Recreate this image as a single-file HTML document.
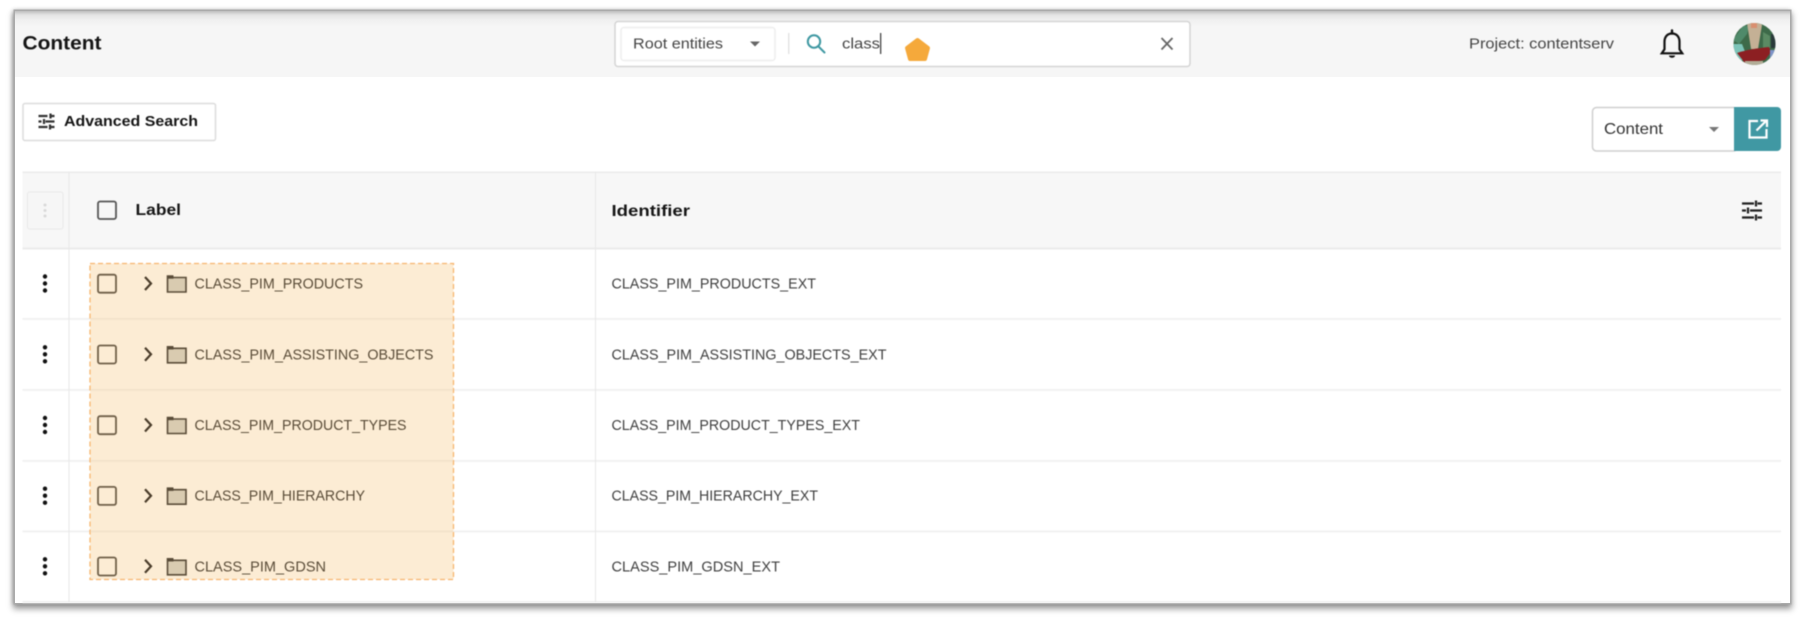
<!DOCTYPE html>
<html><head><meta charset="utf-8"><title>Content</title>
<style>
html,body{margin:0;padding:0;width:1814px;height:630px;overflow:hidden;background:#fff}
#f{position:absolute;left:15px;top:11px;width:1775px;height:592px;background:#fff;box-shadow:0 0 0 1.5px #aaa,0 4px 6px 2px rgba(0,0,0,.38),-1px 0 4px 1px rgba(0,0,0,.25)}
#g{position:absolute;left:15px;top:11px;width:1775px;height:66px;background:linear-gradient(#bdbdbd 0,#e4e4e4 4px,#f0f0f0 9px,#f6f6f6 16px,#f6f6f6 100%)}
svg{position:absolute;left:0;top:0;filter:blur(.65px)}
text{font-family:"Liberation Sans",sans-serif;dominant-baseline:auto}
.r{font-size:14.5px;fill:#3f3f3f}
.h{font-size:14.5px;fill:#5a4c38}
.b{font-weight:700;fill:#151515}
</style></head><body>
<div id="f"></div><div id="g"></div>
<svg width="1814" height="630" viewBox="0 0 1814 630" xmlns="http://www.w3.org/2000/svg">
<text x="22.5" y="49.5" class="b" font-size="19" textLength="79" lengthAdjust="spacingAndGlyphs">Content</text>

<!-- search -->
<rect x="615" y="21.5" width="575" height="45" rx="3" fill="#fff" stroke="#d4d4d4" stroke-width="1.5"/>
<rect x="621" y="27.5" width="154" height="33" rx="3" fill="#fff" stroke="#eee" stroke-width="1.5"/>
<text x="633" y="48.5" font-size="15" fill="#444" textLength="90" lengthAdjust="spacingAndGlyphs">Root entities</text>
<path d="M750 41.5h10l-5 5z" fill="#666"/>
<rect x="788" y="33" width="1.5" height="21" fill="#e4e4e4"/>
<g fill="none" stroke="#3f98a2" stroke-width="2"><circle cx="814" cy="41.5" r="6.2"/><path d="M818.5 46.5l6 6" stroke-linecap="round"/></g>
<text x="842" y="48.5" font-size="15" fill="#444" textLength="38" lengthAdjust="spacingAndGlyphs">class</text>
<rect x="880" y="33" width="1.3" height="21" fill="#444"/>
<path d="M917.5 40l10.500 8-3 11h-15l-3-11z" fill="#f5a93b" stroke="#f5a93b" stroke-width="4" stroke-linejoin="round"/>
<path d="M1161.5 38l11 11.5M1172.5 38l-11 11.5" stroke="#666" stroke-width="1.8" fill="none"/>

<text x="1469" y="48.5" font-size="15" fill="#444" textLength="145" lengthAdjust="spacingAndGlyphs">Project: contentserv</text>
<!-- bell -->
<path d="M1672 33.5c-4.8 0-7.5 3.6-7.500 8.200v7.600l-2.700 4h20.400l-2.700-4v-7.600c0-4.600-2.700-8.200-7.500-8.200z" fill="none" stroke="#111" stroke-width="2.200"/>
<path d="M1672 30.500v3" stroke="#111" stroke-width="2.400" stroke-linecap="round"/>
<path d="M1669 55.500h6c0 3-6 3-6 0z" fill="#111"/>
<!-- avatar -->
<clipPath id="av"><circle cx="1754.500" cy="44" r="21"/></clipPath>
<g clip-path="url(#av)">
<rect x="1733" y="22" width="43" height="44" fill="#3d6a49"/>
<path d="M1733 40l10-14 6 0-2 8-8 10z" fill="#4f8a6a"/>
<path d="M1733 44h9l4 10-5 8-8-6z" fill="#7cc4b8"/>
<path d="M1747 23h12l3 2-4 24h-7z" fill="#c4b095"/>
<path d="M1751 23h6v5h-6z" fill="#d98f70"/>
<path d="M1763 32l7 4v12h-7z" fill="#5b8a63"/>
<path d="M1771 34h6v14h-6z" fill="#29393a"/>
<path d="M1737 53c8-3 22-5 32-6l2 5-6 8-20 3z" fill="#8c1f22"/>
<path d="M1745 61h18v6h-18z" fill="#b3ad97"/>
<path d="M1770 50h8v8h-8z" fill="#7d93c8"/>
</g>

<!-- advanced -->
<rect x="23" y="103.500" width="192.500" height="37" rx="2" fill="#fff" stroke="#dcdcdc" stroke-width="1.500"/>
<g stroke="#333" stroke-width="2.200" fill="none"><path d="M38.500 116h9M51 116h3.500M50.500 113.500v5M38.500 121.500h3M45.500 121.500h9M44 119v5M38.500 127h9M51 127h3.500M50 124.500v5"/></g>
<text x="64" y="126" class="b" font-size="15" textLength="134" lengthAdjust="spacingAndGlyphs">Advanced Search</text>

<!-- content select -->
<rect x="1592.500" y="107.500" width="145" height="43.500" rx="4" fill="#fff" stroke="#cfcfcf" stroke-width="1.500"/>
<text x="1604" y="134" font-size="16" fill="#333" textLength="59" lengthAdjust="spacingAndGlyphs">Content</text>
<path d="M1709 127h10l-5 5z" fill="#777"/>
<path d="M1734 107h43a4 4 0 0 1 4 4v36a4 4 0 0 1-4 4h-43z" fill="#4098a3"/>
<path d="M1758 121h-8.500v16.500h17v-8.500M1756.500 130.500l10-10M1760.500 120.500h6.500v6.500" fill="none" stroke="#fff" stroke-width="2.200"/>

<!-- table -->
<rect x="22.500" y="172" width="1758.500" height="77" fill="#f7f7f7"/>
<rect x="22.500" y="171.500" width="1758.500" height="1.500" fill="#ebebeb"/>
<rect x="22.500" y="247.500" width="1758.500" height="2" fill="#ebebeb"/>
<g fill="#f0f0f0">
<rect x="22.500" y="318" width="1758.500" height="1.800"/>
<rect x="22.500" y="389" width="1758.500" height="1.800"/>
<rect x="22.500" y="460" width="1758.500" height="1.800"/>
<rect x="22.500" y="530.500" width="1758.500" height="1.800"/>
<rect x="22.500" y="601" width="1758.500" height="2"/>
</g>
<rect x="68.500" y="172" width="1" height="430" fill="#e8e8e8"/>
<rect x="595" y="172" width="1" height="430" fill="#e8e8e8"/>

<rect x="27.500" y="192" width="35.500" height="37" rx="2" fill="#f6f6f6" stroke="#e9e9e9"/>
<g fill="#d8d8d8"><circle cx="45" cy="205" r="1.500"/><circle cx="45" cy="210.500" r="1.500"/><circle cx="45" cy="216" r="1.500"/></g>
<rect x="98" y="201.500" width="18" height="17.500" rx="2" fill="none" stroke="#555" stroke-width="1.800"/>
<text x="135.500" y="215" class="b" font-size="16" textLength="45.500" lengthAdjust="spacingAndGlyphs">Label</text>
<text x="611.500" y="216" class="b" font-size="16" textLength="78.500" lengthAdjust="spacingAndGlyphs">Identifier</text>
<g stroke="#222" stroke-width="2.200" fill="none"><path d="M1742 203.500h12M1757.500 203.500h4.500M1756 200.500v6M1742 210.500h4M1750 210.500h12M1748 207.500v6M1742 217.500h12M1757.500 217.500h4.500M1756 214.500v6"/></g>

<!-- highlight -->
<rect x="90" y="263.500" width="363.500" height="316" fill="#fcecd4" stroke="#f7b56e" stroke-width="1.300" stroke-dasharray="5 3"/>
<g fill="#f2e2ca">
<rect x="90.500" y="318" width="362.500" height="1.800"/>
<rect x="90.500" y="389" width="362.500" height="1.800"/>
<rect x="90.500" y="460" width="362.500" height="1.800"/>
<rect x="90.500" y="530.500" width="362.500" height="1.800"/>
</g>

<!-- row 1 -->
<g transform="translate(0,283.500)">
<g fill="#111"><circle cx="45" cy="-7" r="2.200"/><circle cx="45" cy="0" r="2.200"/><circle cx="45" cy="7" r="2.200"/></g>
<rect x="98" y="-8.800" width="18" height="18" rx="2" fill="none" stroke="#6f5f48" stroke-width="1.800"/>
<path d="M145 -6.500l6 6.500-6 6.500" fill="none" stroke="#4a3c2a" stroke-width="2.200"/>
<path d="M167.500 -7.500h5v1.500h13.500v14.500h-18.500z" fill="#d9cbb0" stroke="#5a4c38" stroke-width="1.600"/>
<rect x="167" y="-8" width="6.500" height="3.200" fill="#5a4c38"/>
<text x="194.500" y="5" class="h" textLength="168.500" lengthAdjust="spacingAndGlyphs">CLASS_PIM_PRODUCTS</text>
<text x="611.500" y="5" class="r" textLength="204.500" lengthAdjust="spacingAndGlyphs">CLASS_PIM_PRODUCTS_EXT</text>
</g>
<!-- row 2 -->
<g transform="translate(0,354.300)">
<g fill="#111"><circle cx="45" cy="-7" r="2.200"/><circle cx="45" cy="0" r="2.200"/><circle cx="45" cy="7" r="2.200"/></g>
<rect x="98" y="-8.800" width="18" height="18" rx="2" fill="none" stroke="#6f5f48" stroke-width="1.800"/>
<path d="M145 -6.500l6 6.500-6 6.500" fill="none" stroke="#4a3c2a" stroke-width="2.200"/>
<path d="M167.500 -7.500h5v1.500h13.500v14.500h-18.500z" fill="#d9cbb0" stroke="#5a4c38" stroke-width="1.600"/>
<rect x="167" y="-8" width="6.500" height="3.200" fill="#5a4c38"/>
<text x="194.500" y="5" class="h" textLength="239" lengthAdjust="spacingAndGlyphs">CLASS_PIM_ASSISTING_OBJECTS</text>
<text x="611.500" y="5" class="r" textLength="275" lengthAdjust="spacingAndGlyphs">CLASS_PIM_ASSISTING_OBJECTS_EXT</text>
</g>
<!-- row 3 -->
<g transform="translate(0,425)">
<g fill="#111"><circle cx="45" cy="-7" r="2.200"/><circle cx="45" cy="0" r="2.200"/><circle cx="45" cy="7" r="2.200"/></g>
<rect x="98" y="-8.800" width="18" height="18" rx="2" fill="none" stroke="#6f5f48" stroke-width="1.800"/>
<path d="M145 -6.500l6 6.500-6 6.500" fill="none" stroke="#4a3c2a" stroke-width="2.200"/>
<path d="M167.500 -7.500h5v1.500h13.500v14.500h-18.500z" fill="#d9cbb0" stroke="#5a4c38" stroke-width="1.600"/>
<rect x="167" y="-8" width="6.500" height="3.200" fill="#5a4c38"/>
<text x="194.500" y="5" class="h" textLength="212" lengthAdjust="spacingAndGlyphs">CLASS_PIM_PRODUCT_TYPES</text>
<text x="611.500" y="5" class="r" textLength="248.500" lengthAdjust="spacingAndGlyphs">CLASS_PIM_PRODUCT_TYPES_EXT</text>
</g>
<!-- row 4 -->
<g transform="translate(0,495.700)">
<g fill="#111"><circle cx="45" cy="-7" r="2.200"/><circle cx="45" cy="0" r="2.200"/><circle cx="45" cy="7" r="2.200"/></g>
<rect x="98" y="-8.800" width="18" height="18" rx="2" fill="none" stroke="#6f5f48" stroke-width="1.800"/>
<path d="M145 -6.500l6 6.500-6 6.500" fill="none" stroke="#4a3c2a" stroke-width="2.200"/>
<path d="M167.500 -7.500h5v1.500h13.500v14.500h-18.500z" fill="#d9cbb0" stroke="#5a4c38" stroke-width="1.600"/>
<rect x="167" y="-8" width="6.500" height="3.200" fill="#5a4c38"/>
<text x="194.500" y="5" class="h" textLength="170.500" lengthAdjust="spacingAndGlyphs">CLASS_PIM_HIERARCHY</text>
<text x="611.500" y="5" class="r" textLength="206.500" lengthAdjust="spacingAndGlyphs">CLASS_PIM_HIERARCHY_EXT</text>
</g>
<!-- row 5 -->
<g transform="translate(0,566.300)">
<g fill="#111"><circle cx="45" cy="-7" r="2.200"/><circle cx="45" cy="0" r="2.200"/><circle cx="45" cy="7" r="2.200"/></g>
<rect x="98" y="-8.800" width="18" height="18" rx="2" fill="none" stroke="#6f5f48" stroke-width="1.800"/>
<path d="M145 -6.500l6 6.500-6 6.500" fill="none" stroke="#4a3c2a" stroke-width="2.200"/>
<path d="M167.500 -7.500h5v1.500h13.500v14.500h-18.500z" fill="#d9cbb0" stroke="#5a4c38" stroke-width="1.600"/>
<rect x="167" y="-8" width="6.500" height="3.200" fill="#5a4c38"/>
<text x="194.500" y="5" class="h" textLength="131.500" lengthAdjust="spacingAndGlyphs">CLASS_PIM_GDSN</text>
<text x="611.500" y="5" class="r" textLength="168.500" lengthAdjust="spacingAndGlyphs">CLASS_PIM_GDSN_EXT</text>
</g>
</svg>
</body></html>
